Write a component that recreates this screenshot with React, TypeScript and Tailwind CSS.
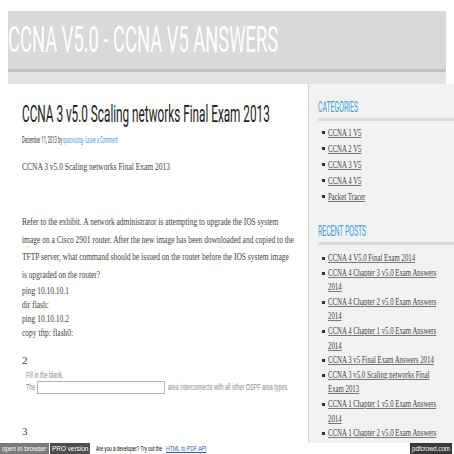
const categories = ["CCNA 1 V5", "CCNA 2 V5", "CCNA 3 V5", "CCNA 4 V5", "Packet Tracer"];

const recentPosts = [
  ["CCNA 4 V5.0 Final Exam 2014"],
  ["CCNA 4 Chapter 3 v5.0 Exam Answers", "2014"],
  ["CCNA 4 Chapter 2 v5.0 Exam Answers", "2014"],
  ["CCNA 4 Chapter 1 v5.0 Exam Answers", "2014"],
  ["CCNA 3 v5 Final Exam Answers 2014"],
  ["CCNA 3 v5.0 Scaling networks Final", "Exam 2013"],
  ["CCNA 1 Chapter 1 v5.0 Exam Answers", "2014"],
  ["CCNA 1 Chapter 2 v5.0 Exam Answers"],
];

const question = [
  "Refer to the exhibit. A network administrator is attempting to upgrade the IOS system",
  "image on a Cisco 2901 router. After the new image has been downloaded and copied to the",
  "TFTP server, what command should be issued on the router before the IOS system image",
  "is upgraded on the router?",
];

const answers = ["ping 10.10.10.1", "dir flash:", "ping 10.10.10.2", "copy tftp: flash0:"];

function SideHeading({ children }: { children: string }) {
  return (
    <div>
      <div className="origin-left scale-x-[0.49] whitespace-nowrap font-['Roboto',sans-serif] text-[14px] leading-[16px] text-[#3d9fd6]">
        {children}
      </div>
      <div className="mt-[3px] h-[3px] bg-[#dcdcdc]" />
    </div>
  );
}

function SideItem({ lines, leading }: { lines: string[]; leading: string }) {
  return (
    <li className="flex">
      <span className="mr-[3px] mt-[6px] h-[3px] w-[3px] shrink-0 bg-[#333]" />
      <div className="min-w-0 flex-1">
        {lines.map((line) => (
          <div
            key={line}
            className={`origin-left scale-x-[0.68] whitespace-nowrap font-['Liberation_Serif',serif] text-[10px] text-[#444] underline decoration-[#777] ${leading}`}
          >
            {line}
          </div>
        ))}
      </div>
    </li>
  );
}

export default function App() {
  return (
    <div className="flex h-[454px] w-[454px] flex-col overflow-hidden bg-white">
      <div className="min-h-0 flex-1 overflow-hidden px-[8px] pt-[11px]">
        <header className="w-[438px]">
          <div className="flex h-[58px] items-center bg-[#d9d9d9]">
            <div className="origin-left scale-x-[0.51] whitespace-nowrap font-['Roboto',sans-serif] text-[36px] leading-none text-white">
              CCNA V5.0 - CCNA V5 ANSWERS
            </div>
          </div>
          <div className="h-[3px] bg-[#c2c2c2]" />
          <div className="h-[12px] bg-[#e3e3e3]" />
        </header>

        <div className="flex h-full w-[438px]">
          <main className="w-[301px] shrink-0 overflow-hidden border-r border-[#d4d4d4] pl-[14px] pt-[16px]">
            <h1 className="origin-left scale-x-[0.49] whitespace-nowrap font-['Roboto',sans-serif] text-[24px] leading-[28px] text-[#222]">
              CCNA 3 v5.0 Scaling networks Final Exam 2013
            </h1>
            <div className="mt-[6px] origin-left scale-x-[0.45] whitespace-nowrap font-['Roboto',sans-serif] text-[9px] leading-[12px] text-[#333]">
              December 11, 2013 by <span className="text-[#3a9ad6]">quocvuong- Leave a Comment</span>
            </div>
            <p className="mt-[11px] origin-left scale-x-[0.68] whitespace-nowrap font-['Liberation_Serif',serif] text-[11px] leading-[18px] text-[#444]">
              CCNA 3 v5.0 Scaling networks Final Exam 2013
            </p>

            <div className="mt-[38px] font-['Liberation_Serif',serif] text-[11px] text-[#444]">
              {question.map((line) => (
                <div key={line} className="origin-left scale-x-[0.68] whitespace-nowrap leading-[17.5px]">
                  {line}
                </div>
              ))}
              {answers.map((line) => (
                <div key={line} className="origin-left scale-x-[0.68] whitespace-nowrap leading-[14px]">
                  {line}
                </div>
              ))}
              <div className="mt-[12px] leading-[18px]">2</div>
            </div>

            <div className="ml-[4px] font-['Liberation_Sans',Arial,sans-serif] text-[9px] text-[#888]">
              <div className="origin-left scale-x-[0.6] whitespace-nowrap leading-[12px]">Fill in the blank.</div>
              <div className="flex items-center">
                <div className="w-[11px] shrink-0">
                  <div className="origin-left scale-x-[0.6] whitespace-nowrap">The</div>
                </div>
                <div className="h-[13px] w-[128px] shrink-0 border border-[#b5b5b5] bg-white" />
                <div className="ml-[3px] origin-left scale-x-[0.6] whitespace-nowrap">
                  area interconnects with all other OSPF area types.
                </div>
              </div>
            </div>

            <div className="mt-[27px] font-['Liberation_Serif',serif] text-[11px] leading-[18px] text-[#444]">3</div>
          </main>

          <aside className="flex-1 bg-[#f2f2f2] pl-[9px] pr-[9px] pt-[15px]">
            <SideHeading>CATEGORIES</SideHeading>
            <ul className="mt-[4px] pl-[4px]">
              {categories.map((c) => (
                <SideItem key={c} lines={[c]} leading="leading-[16px]" />
              ))}
            </ul>
            <div className="mt-[18px]">
              <SideHeading>RECENT POSTS</SideHeading>
            </div>
            <ul className="mt-[6px] pl-[4px]">
              {recentPosts.map((p) => (
                <SideItem key={p[0]} lines={p} leading="leading-[14.6px]" />
              ))}
            </ul>
          </aside>
        </div>
      </div>

      <footer className="flex h-[11px] shrink-0 items-center font-['Liberation_Sans',Arial,sans-serif] text-[8px] leading-[11px]">
        <div className="h-full w-[49px] shrink-0 overflow-hidden bg-[#7a7a7a] pl-[2px] text-white">
          <div className="origin-left scale-x-[0.78] whitespace-nowrap">open in browser</div>
        </div>
        <div className="ml-[1px] h-full w-[40px] shrink-0 overflow-hidden bg-[#4e4e4e] pl-[2px] text-white">
          <div className="origin-left scale-x-[0.8] whitespace-nowrap">PRO version</div>
        </div>
        <div className="ml-[6px] w-[70px] shrink-0">
          <div className="origin-left scale-x-[0.57] whitespace-nowrap text-black">Are you a developer? Try out the</div>
        </div>
        <div className="w-[44px] shrink-0">
          <div className="origin-left scale-x-[0.64] whitespace-nowrap text-[#2a5db0] underline">HTML to PDF API</div>
        </div>
        <div className="ml-auto mr-[2px] h-full w-[42px] shrink-0 overflow-hidden bg-[#3a3a3a] pl-[2px] text-white">
          <div className="origin-left scale-x-[0.76] whitespace-nowrap">pdfcrowd.com</div>
        </div>
      </footer>
    </div>
  );
}
